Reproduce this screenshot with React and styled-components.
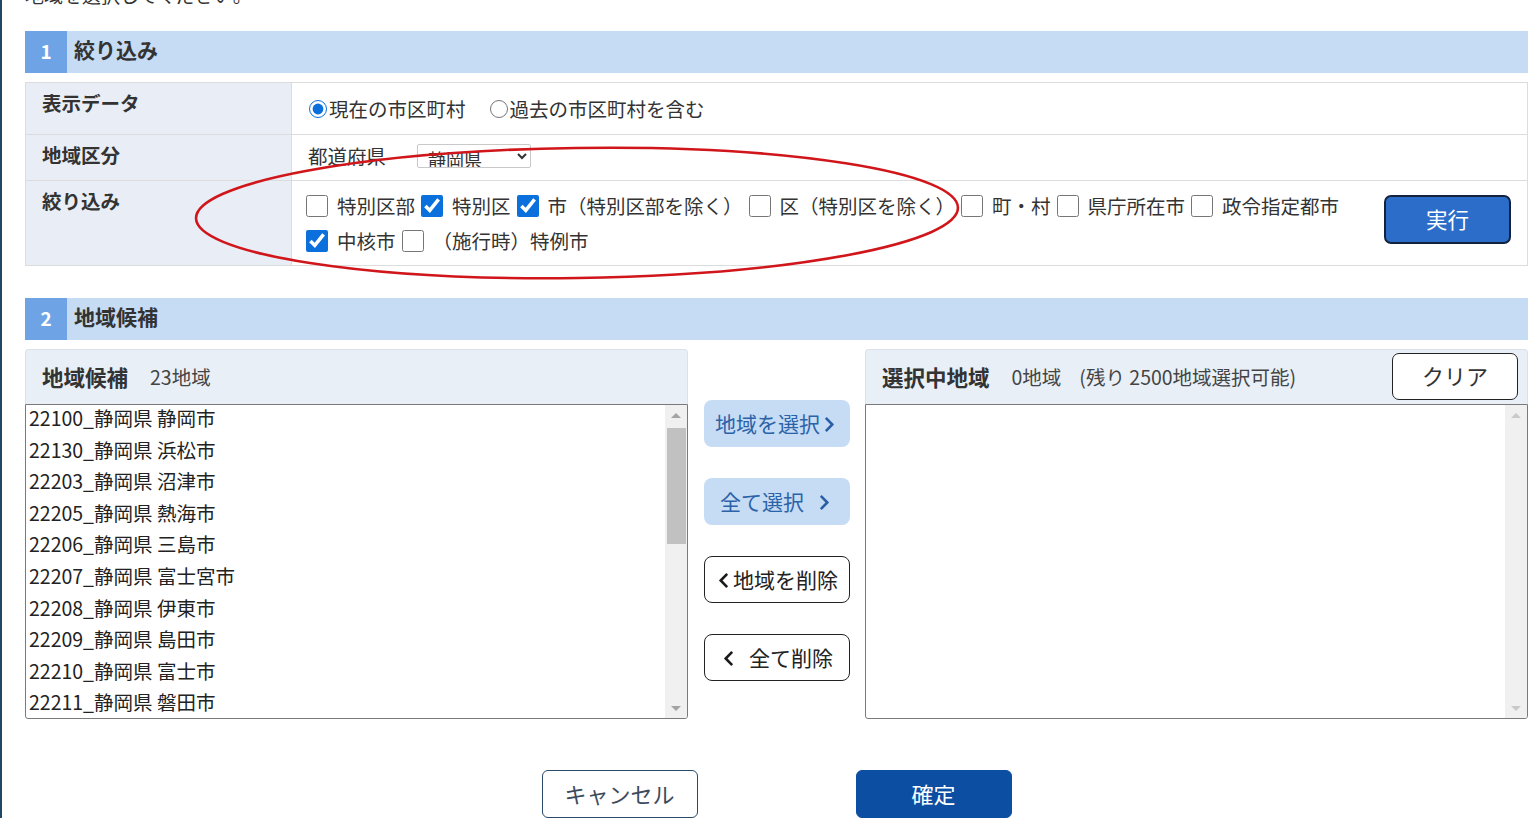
import React from "react";
import styled, { createGlobalStyle } from "styled-components";
import { FaChevronLeft, FaChevronRight } from "react-icons/fa";

const GlobalStyle = createGlobalStyle`
  html, body {
    margin: 0;
    padding: 0;
    background: #fff;
  }
  body {
    font-family: "Noto Sans CJK JP", "Noto Sans", sans-serif;
    color: #333;
    overflow: hidden;
  }
  * {
    box-sizing: border-box;
  }
`;

const CANDIDATES = [
  "22100_静岡県 静岡市",
  "22130_静岡県 浜松市",
  "22203_静岡県 沼津市",
  "22205_静岡県 熱海市",
  "22206_静岡県 三島市",
  "22207_静岡県 富士宮市",
  "22208_静岡県 伊東市",
  "22209_静岡県 島田市",
  "22210_静岡県 富士市",
  "22211_静岡県 磐田市",
  "22212_静岡県 焼津市",
  "22213_静岡県 掛川市",
  "22214_静岡県 藤枝市",
  "22215_静岡県 御殿場市",
  "22216_静岡県 袋井市",
  "22219_静岡県 下田市",
  "22220_静岡県 裾野市",
  "22221_静岡県 湖西市",
  "22222_静岡県 伊豆市",
  "22223_静岡県 御前崎市",
  "22224_静岡県 菊川市",
  "22225_静岡県 伊豆の国市",
  "22226_静岡県 牧之原市",
];

const FILTER_LINES = [
  [
    { label: "特別区部", checked: false },
    { label: "特別区", checked: true },
    { label: "市（特別区部を除く）", checked: true },
    { label: "区（特別区を除く）", checked: false },
    { label: "町・村", checked: false },
    { label: "県庁所在市", checked: false },
    { label: "政令指定都市", checked: false },
  ],
  [
    { label: "中核市", checked: true },
    { label: "（施行時）特例市", checked: false },
  ],
];

const Page = styled.div`
  min-height: 100vh;
  border-left: 2px solid #1f4866;
  padding: 0 12px 0 23px;
`;

const Lead = styled.p`
  margin: -17px 0 24px;
  font-size: 19px;
  line-height: 24px;
  color: #333;
`;

const SectionHead = styled.div`
  display: flex;
  align-items: center;
  height: 42px;
  margin-top: ${(p) => p.$top || 0}px;
  background: #c6dcf5;
`;

const SectionNum = styled.span`
  width: 42px;
  height: 42px;
  display: flex;
  align-items: center;
  justify-content: center;
  padding-bottom: 4px;
  background: #6ea4e6;
  color: #fff;
  font-weight: 700;
  font-size: 19px;
`;

const SectionTitle = styled.span`
  padding: 0 0 5px 7px;
  font-size: 21px;
  line-height: 1;
  font-weight: 700;
  color: #333;
`;

const FilterArea = styled.div`
  position: relative;
  margin-top: 9px;
`;

const FilterTable = styled.div`
  border: 1px solid #dcdcdc;
`;

const Row = styled.div`
  display: flex;
  height: ${(p) => p.$h}px;
  & + & {
    border-top: 1px solid #dcdcdc;
  }
`;

const LabelCell = styled.div`
  width: 266px;
  flex: none;
  padding: 8px 0 0 16px;
  background: #e9eef6;
  border-right: 1px solid #dcdcdc;
  font-size: 19.5px;
  line-height: 24px;
  font-weight: 700;
  color: #333;
`;

const ValueCell = styled.div`
  flex: 1;
  display: flex;
  align-items: ${(p) => p.$align || "center"};
  padding: ${(p) => p.$pad || "0 0 0 15px"};
  font-size: 19.5px;
  color: #333;
`;

const RadioLabel = styled.label`
  display: flex;
  align-items: center;
  margin-right: 22px;
  font-size: 19.5px;
  line-height: 24px;
  input {
    width: 18px;
    height: 18px;
    margin: 0 2px 0 2px;
    accent-color: #0b6fdc;
  }
`;

const PrefLabel = styled.span`
  margin-right: 31px;
  line-height: 24px;
`;

const PrefSelect = styled.select`
  width: 114px;
  height: 24px;
  padding: 0 6px;
  border: 1px solid #c9c9c9;
  border-radius: 2px;
  background: #fff;
  font-family: inherit;
  font-size: 18px;
  color: #333;
`;

const CheckArea = styled.div`
  flex: 1;
  padding-top: 7px;
`;

const CheckLine = styled.div`
  display: flex;
  align-items: center;
  height: 35px;
`;

const CheckItem = styled.label`
  display: flex;
  align-items: center;
  margin-right: 6px;
  font-size: 19.5px;
  line-height: 24px;
  white-space: nowrap;
  input {
    width: 22px;
    height: 22px;
    margin: 0 9px 0 0;
    accent-color: #0b6fdc;
  }
`;

const RunButton = styled.button`
  width: 127px;
  height: 49px;
  margin: 14px 16px 0 0;
  padding-bottom: 3px;
  border: 2px solid #14233d;
  border-radius: 7px;
  background: #2d6dca;
  color: #fff;
  font-family: inherit;
  font-size: 21.5px;
`;

const Ellipse = styled.svg`
  position: absolute;
  left: 0;
  top: 0;
  overflow: visible;
  pointer-events: none;
`;

const PickerGrid = styled.div`
  display: grid;
  grid-template-columns: 1fr 146px 1fr;
  column-gap: 15.5px;
  margin-top: 9px;
`;

const Panel = styled.div`
  display: flex;
  flex-direction: column;
`;

const PanelHead = styled.div`
  display: flex;
  align-items: center;
  height: 55px;
  padding: 0 9px 2px 16px;
  background: #e9eff7;
  border: 1px solid #dbe1ea;
  border-bottom: none;
  border-radius: 4px 4px 0 0;
`;

const PanelTitle = styled.span`
  font-size: 21.5px;
  font-weight: 700;
  color: #333;
  margin-right: 22px;
`;

const PanelNote = styled.span`
  font-size: 19.5px;
  color: #444;
  margin-right: ${(p) => p.$gap || 0}px;
`;

const ClearButton = styled.button`
  margin-left: auto;
  width: 126px;
  height: 47px;
  padding-bottom: 3px;
  border: 1px solid #222;
  border-radius: 7px;
  background: #fff;
  font-family: inherit;
  font-size: 22px;
  color: #333;
`;

const ListBox = styled.div`
  display: flex;
  height: 315px;
  border: 1px solid #7a7a7a;
  border-radius: 0 0 3px 3px;
  overflow: hidden;
  background: #fff;
`;

const ListItems = styled.div`
  flex: 1;
  overflow: hidden;
  margin-top: -3px;
  padding-left: 3px;
`;

const ListItem = styled.div`
  height: 31.6px;
  line-height: 31.6px;
  font-size: 19.5px;
  color: #222;
  white-space: nowrap;
`;

const ScrollTrack = styled.div`
  width: 22px;
  flex: none;
  display: flex;
  flex-direction: column;
  background: #f0f0f0;
`;

const ScrollArrow = styled.div`
  height: 20px;
  display: flex;
  align-items: center;
  justify-content: center;
  &::before {
    content: "";
    border-left: 5px solid transparent;
    border-right: 5px solid transparent;
    ${(p) => (p.$dir === "up" ? "border-bottom" : "border-top")}: 5px solid
      ${(p) => (p.$off ? "#c9c9c9" : "#a3a3a3")};
  }
`;

const ScrollBody = styled.div`
  flex: 1;
  padding: 0 1px 0 2px;
`;

const ScrollThumb = styled.div`
  background: #c1c1c1;
`;

const MoveColumn = styled.div`
  display: flex;
  flex-direction: column;
  gap: 31px;
  padding-top: 51px;
`;

const MoveButton = styled.button`
  height: 47px;
  display: flex;
  align-items: center;
  justify-content: center;
  gap: ${(p) => p.$gap || 2}px;
  padding-bottom: 2px;
  border-radius: 8px;
  font-family: inherit;
  font-size: 21px;
  border: ${(p) => (p.$light ? "none" : "1px solid #222")};
  background: ${(p) => (p.$light ? "#c6dcf5" : "#fff")};
  color: ${(p) => (p.$light ? "#2c62a8" : "#222")};
  svg {
    font-size: 17px;
    margin-top: 2px;
    color: ${(p) => (p.$light ? "#2a5fa8" : "#1a1a1a")};
  }
`;

const Footer = styled.div`
  display: flex;
  justify-content: center;
  gap: 158px;
  margin-top: 51px;
`;

const FooterButton = styled.button`
  width: 156px;
  height: 48px;
  padding-bottom: 3px;
  border-radius: 6px;
  font-family: inherit;
  font-size: 22px;
  border: 1px solid ${(p) => (p.$primary ? "#0c4ea2" : "#2b4a6b")};
  background: ${(p) => (p.$primary ? "#0c4ea2" : "#fff")};
  color: ${(p) => (p.$primary ? "#fff" : "#3d4b5c")};
`;

function ScrollBar({ thumbTop, thumbHeight, off }) {
  return (
    <ScrollTrack>
      <ScrollArrow $dir="up" $off={off} />
      <ScrollBody>
        {!off && (
          <ScrollThumb style={{ marginTop: thumbTop, height: thumbHeight }} />
        )}
      </ScrollBody>
      <ScrollArrow $dir="down" $off={off} />
    </ScrollTrack>
  );
}

export default function App() {
  return (
    <>
      <GlobalStyle />
      <Page>
        <Lead>地域を選択してください。</Lead>

        <SectionHead>
          <SectionNum>1</SectionNum>
          <SectionTitle>絞り込み</SectionTitle>
        </SectionHead>

        <FilterArea>
          <FilterTable>
            <Row $h={51}>
              <LabelCell>表示データ</LabelCell>
              <ValueCell>
                <RadioLabel>
                  <input type="radio" name="data" defaultChecked />
                  現在の市区町村
                </RadioLabel>
                <RadioLabel>
                  <input type="radio" name="data" />
                  過去の市区町村を含む
                </RadioLabel>
              </ValueCell>
            </Row>
            <Row $h={46}>
              <LabelCell>地域区分</LabelCell>
              <ValueCell $pad="0 0 3px 16px">
                <PrefLabel>都道府県</PrefLabel>
                <PrefSelect defaultValue="22">
                  <option value="22">静岡県</option>
                </PrefSelect>
              </ValueCell>
            </Row>
            <Row $h={85}>
              <LabelCell>絞り込み</LabelCell>
              <ValueCell $align="flex-start" $pad="0 0 0 14px">
                <CheckArea>
                  {FILTER_LINES.map((line, i) => (
                    <CheckLine key={i}>
                      {line.map((item) => (
                        <CheckItem key={item.label}>
                          <input type="checkbox" defaultChecked={item.checked} />
                          {item.label}
                        </CheckItem>
                      ))}
                    </CheckLine>
                  ))}
                </CheckArea>
                <RunButton>実行</RunButton>
              </ValueCell>
            </Row>
          </FilterTable>
          <Ellipse width="1000" height="220">
            <ellipse
              cx="552"
              cy="131"
              rx="381"
              ry="65"
              fill="none"
              stroke="#d0161b"
              strokeWidth="2.6"
              transform="rotate(-0.8 552 131)"
            />
          </Ellipse>
        </FilterArea>

        <SectionHead $top={32}>
          <SectionNum>2</SectionNum>
          <SectionTitle>地域候補</SectionTitle>
        </SectionHead>

        <PickerGrid>
          <Panel>
            <PanelHead>
              <PanelTitle>地域候補</PanelTitle>
              <PanelNote>23地域</PanelNote>
            </PanelHead>
            <ListBox>
              <ListItems>
                {CANDIDATES.map((name) => (
                  <ListItem key={name}>{name}</ListItem>
                ))}
              </ListItems>
              <ScrollBar thumbTop={3} thumbHeight={116} />
            </ListBox>
          </Panel>

          <MoveColumn>
            <MoveButton $light $gap={1}>
              地域を選択
              <FaChevronRight />
            </MoveButton>
            <MoveButton $light $gap={12}>
              全て選択
              <FaChevronRight />
            </MoveButton>
            <MoveButton $gap={1}>
              <FaChevronLeft />
              地域を削除
            </MoveButton>
            <MoveButton $gap={12}>
              <FaChevronLeft />
              全て削除
            </MoveButton>
          </MoveColumn>

          <Panel>
            <PanelHead>
              <PanelTitle>選択中地域</PanelTitle>
              <PanelNote $gap={18}>0地域</PanelNote>
              <PanelNote>(残り 2500地域選択可能)</PanelNote>
              <ClearButton>クリア</ClearButton>
            </PanelHead>
            <ListBox>
              <ListItems />
              <ScrollBar off />
            </ListBox>
          </Panel>
        </PickerGrid>

        <Footer>
          <FooterButton>キャンセル</FooterButton>
          <FooterButton $primary>確定</FooterButton>
        </Footer>
      </Page>
    </>
  );
}
